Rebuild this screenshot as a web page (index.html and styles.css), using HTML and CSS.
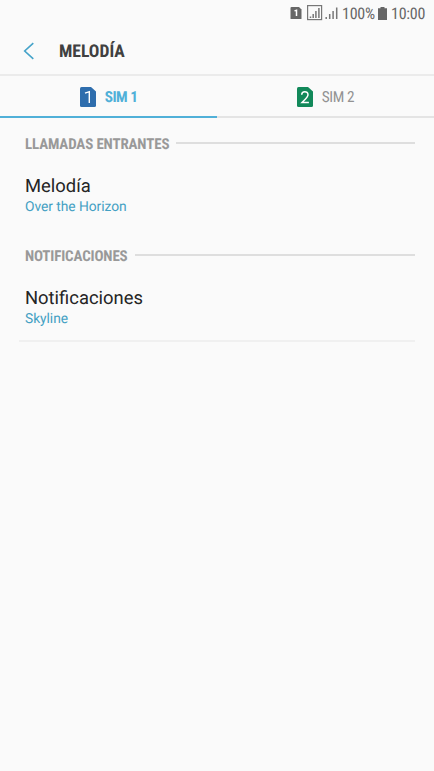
FILE: index.html
```html
<!DOCTYPE html>
<html lang="es">
<head>
<meta charset="utf-8">
<title>Melodía</title>
<link rel="stylesheet" href="styles.css">
</head>
<body>
<div class="status">
  <svg class="status-icons" width="50" height="18" viewBox="0 0 50 18">
    <path fill="#666" d="M1.500 3H9l2.500 2.500V14.500q0 .5-.5.5H1q-.5 0-.5-.5V4q0-1 1-1z"/>
    <path fill="none" stroke="#fff" stroke-width="1.500" d="M4.500 6.900l2-.6V12"/>
    <rect x="17.600" y="1.600" width="14" height="14" fill="none" stroke="#777" stroke-width="1.200"/>
    <path stroke="#777" stroke-width="1.500" d="M20.500 14v-1.500M23.200 14v-4M25.900 14V7M28.900 14V4"/>
    <path stroke="#777" stroke-width="1.500" d="M36.200 15v-2M39.700 15v-5M43.100 15V7M46.700 15V3.500"/>
  </svg>
  <span class="percent">100%</span>
  <svg class="battery" width="9" height="13" viewBox="0 0 9 13"><path fill="#666" d="M2.500 0h4v1.300H9V13H0V1.300h2.500z"/></svg>
  <span class="clock">10:00</span>
</div>
<header class="header">
  <svg class="back" width="12" height="18" viewBox="0 0 12 18"><path fill="none" stroke="#45a3c9" stroke-width="1.600" d="M10.300 1.200L1.700 9l8.600 7.800"/></svg>
  <h1>MELODÍA</h1>
</header>
<nav class="tabs">
  <div class="tab active">
    <svg class="sim" width="16" height="20" viewBox="0 0 16 20"><path fill="#2e6dad" d="M1.500 0H11l5 4.500v14q0 1.500-1.500 1.500h-13Q0 20 0 18.500v-17Q0 0 1.500 0z"/><path fill="none" stroke="#fff" stroke-width="1.400" d="M5 6.200l4.300-1.500V16"/></svg>
    <span>SIM 1</span>
  </div>
  <div class="tab">
    <svg class="sim" width="16" height="20" viewBox="0 0 16 20"><path fill="#12895a" d="M1.500 0H11l5 4.500v14q0 1.500-1.500 1.500h-13Q0 20 0 18.500v-17Q0 0 1.500 0z"/><path fill="none" stroke="#fff" stroke-width="1.500" d="M4.700 7.800C4.700 3.600 11 3.600 11 7.700c0 2.300-2.500 4.300-6 7.900h6.900"/></svg>
    <span>SIM 2</span>
  </div>
</nav>
<main>
  <section>
    <h2><span>LLAMADAS ENTRANTES</span></h2>
    <div class="item"><div class="name">Melodía</div><div class="value">Over the Horizon</div></div>
  </section>
  <section class="last">
    <h2><span>NOTIFICACIONES</span></h2>
    <div class="item"><div class="name">Notificaciones</div><div class="value">Skyline</div></div>
  </section>
</main>
</body>
</html>
```
FILE: styles.css
```css
* { box-sizing: border-box; }
body { margin: 0; height: 771px; overflow: hidden; background: #fafafa; font-family: Roboto, sans-serif; text-rendering: geometricPrecision; }
svg { display: block; flex: none; }
.status, h1, h2, .tab { font-family: "Roboto Condensed", Roboto, sans-serif; font-stretch: 75%; white-space: nowrap; }
.status { display: flex; height: 27px; padding-left: 290px; align-items: center; color: #666; font-size: 16px; line-height: 27px; letter-spacing: -0.25px; }
.status-icons { margin-right: 2px; margin-top: -1px; }
.percent { width: 33px; }
.battery { margin: 0 4px 0 3px; }
.header { display: flex; height: 49px; align-items: center; padding-left: 23px; border-bottom: 2px solid #ebebeb; }
.back { margin-right: 24px; }
h1 { margin: 0; padding-top: 2px; font-size: 17.6px; font-weight: 700; color: #404040; }
.tabs { display: flex; height: 42px; }
.tab { display: flex; flex: 1; align-items: center; justify-content: center; border-bottom: 2px solid #e4e4e4; font-size: 15.3px; letter-spacing: -0.35px; color: #929292; padding-top: 2px; }
.tab.active { border-color: #50b0d8; color: #50b0d8; font-weight: 700; letter-spacing: -0.5px; }
.sim { margin-right: 9px; }
main { padding: 16px 19px 0; }
section { height: 112px; }
.last { height: 96px; border-bottom: 2px solid #f0f0f0; }
h2 { display: flex; margin: 0; height: 20px; padding-left: 6px; font-size: 15px; line-height: 20px; font-weight: 700; letter-spacing: -0.15px; color: #999; }
h2::after { content: ""; flex: 1; height: 2px; margin: 8px 0 0 7px; background: #dedede; }
.item { padding: 21px 0 0 6px; }
.name { height: 23px; line-height: 23px; font-size: 18.4px; color: #252525; }
.value { height: 18px; line-height: 18px; font-size: 13.8px; letter-spacing: -0.05px; color: #43a0c3; }
```
